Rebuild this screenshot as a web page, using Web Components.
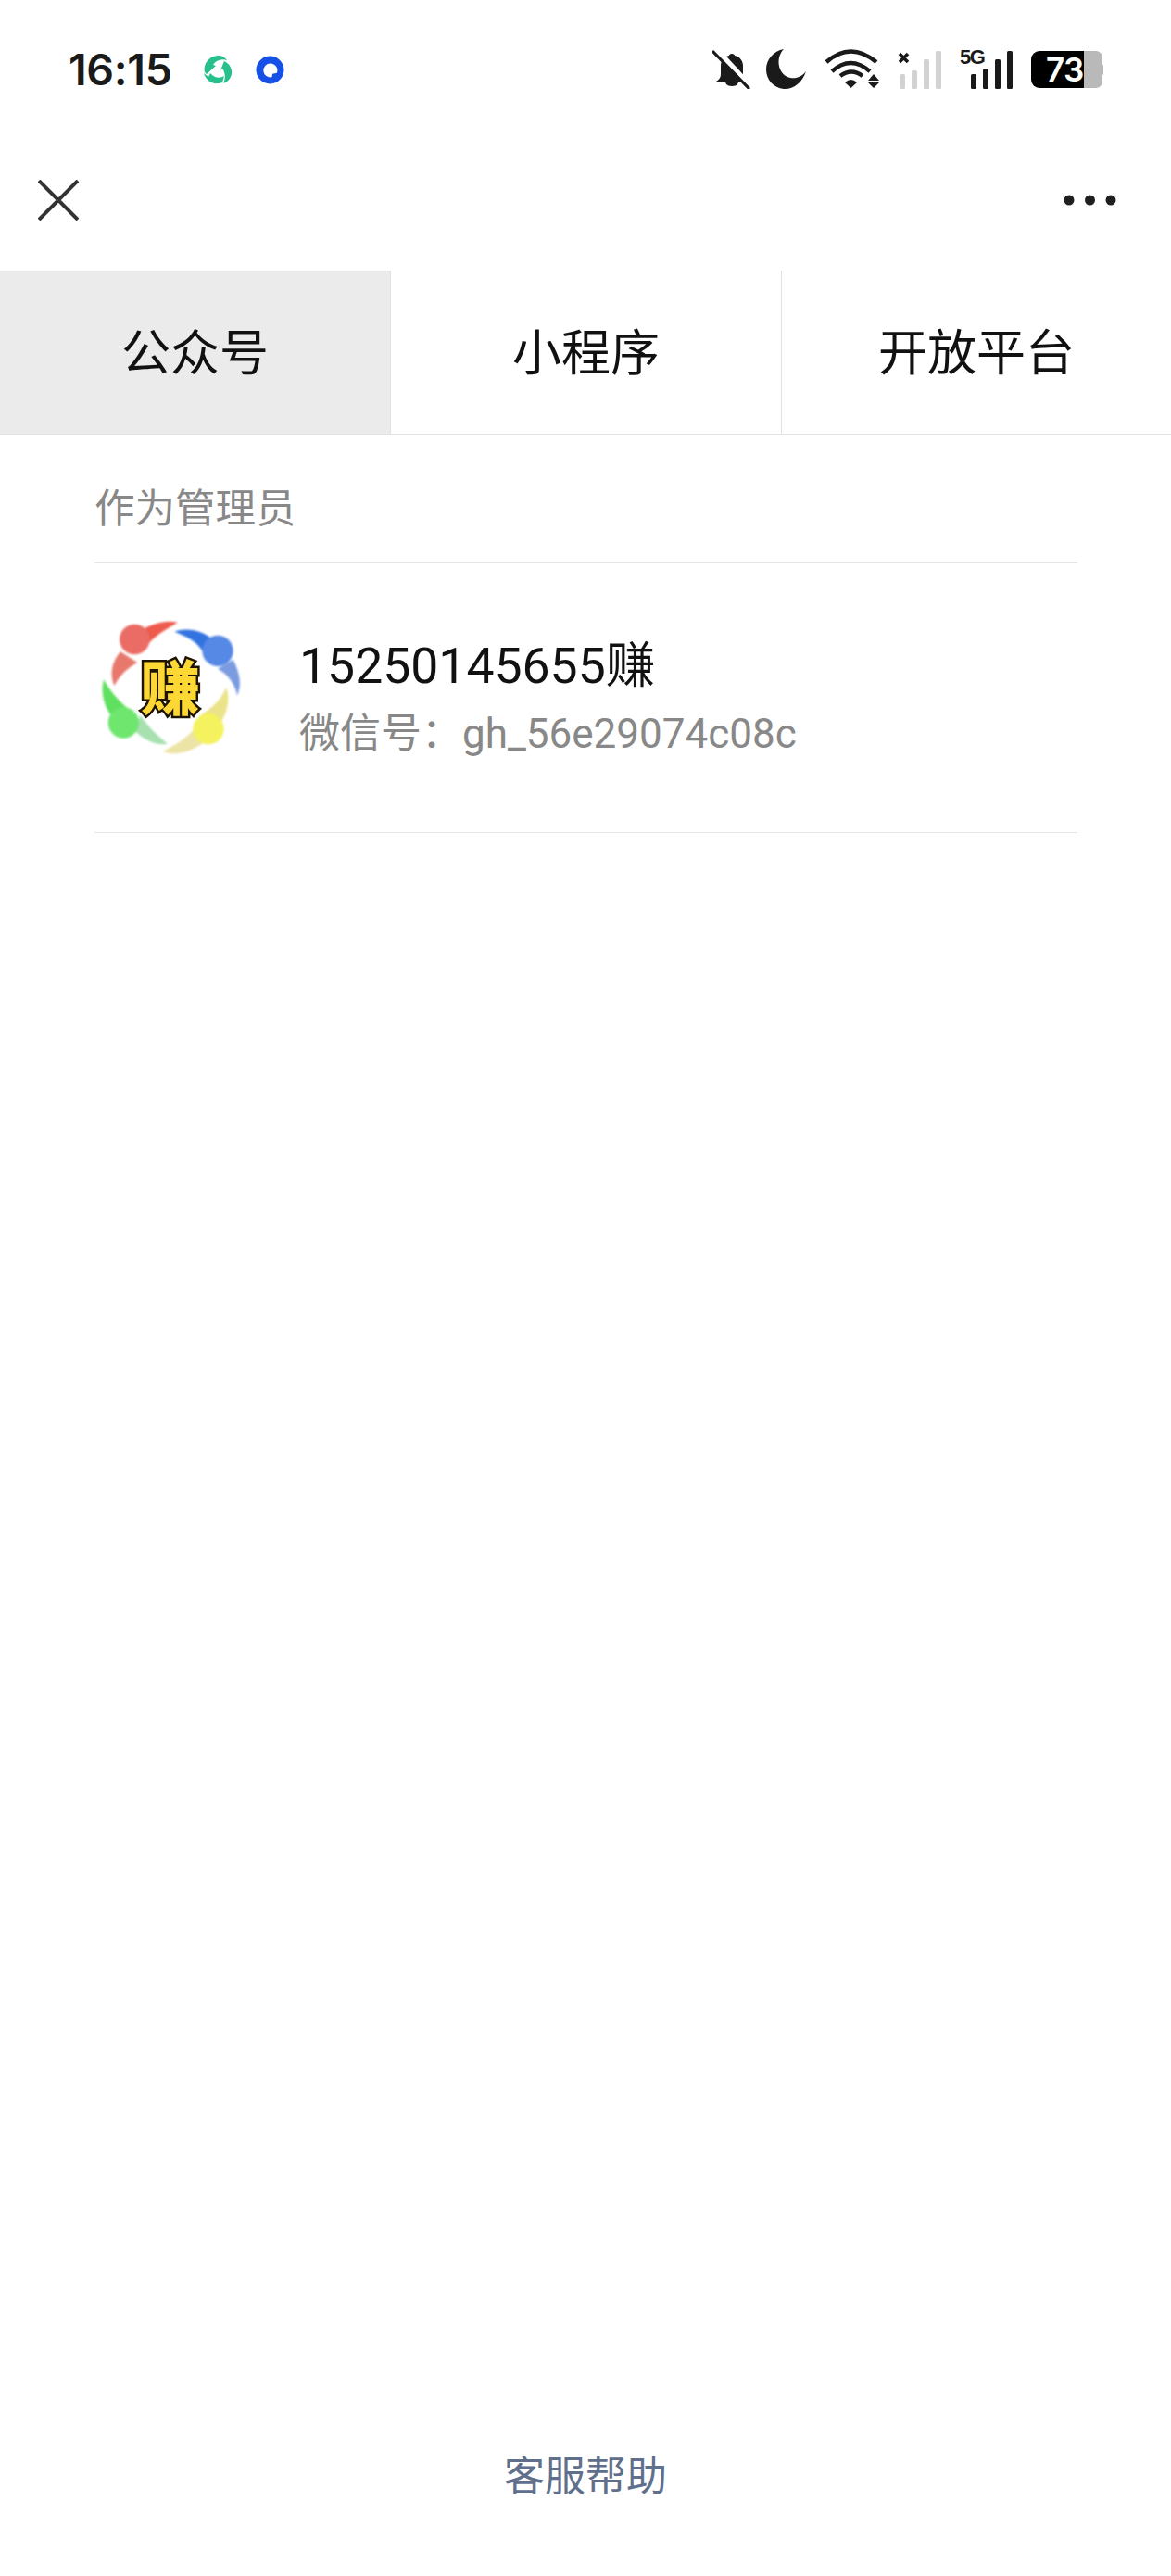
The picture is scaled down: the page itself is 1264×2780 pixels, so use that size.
<!DOCTYPE html>
<html lang="zh-CN">
<head>
<meta charset="utf-8">
<title>公众号</title>
<style>
  html, body { margin: 0; height: 100%; background: #fff; }
  body { font-family: Roboto, "Noto Sans CJK SC", sans-serif; }
</style>
</head>
<body>
<app-page>
  <status-bar slot="top" time="16:15"></status-bar>
  <nav-bar slot="top"></nav-bar>
  <tab-bar slot="top">
    <tab-item active>公众号</tab-item>
    <tab-item>小程序</tab-item>
    <tab-item>开放平台</tab-item>
  </tab-bar>
  <account-list slot="top" heading="作为管理员">
    <account-row name="15250145655赚" wxid="微信号：gh_56e29074c08c"></account-row>
  </account-list>
  <help-link slot="bottom">客服帮助</help-link>
</app-page>

<script>
class AppPage extends HTMLElement {
  constructor() {
    super();
    this.attachShadow({ mode: "open" }).innerHTML = `
      <style>
        :host { display: flex; flex-direction: column; height: 2780px; overflow: hidden; }
        .top { flex: 1; }
      </style>
      <div class="top"><slot name="top"></slot></div>
      <slot name="bottom"></slot>`;
  }
}

class StatusBar extends HTMLElement {
  constructor() {
    super();
    this.attachShadow({ mode: "open" }).innerHTML = `
      <style>
        :host { display: flex; align-items: center; height: 150px; padding: 0 74px; box-sizing: border-box; }
        .time { font: 600 46.5px/1 Inter, "Liberation Sans", sans-serif; color: #1a1a1a; letter-spacing: -0.3px; width: 144px; }
        .apps { display: flex; gap: 25px; align-items: center; }
        .right { margin-left: auto; display: flex; align-items: center; }
        svg { display: block; }
        .signal { position: relative; width: 57px; height: 44px; margin-left: 20px; }
        .signal span { position: absolute; left: 0; top: -2px; font: 700 22px/1 "Liberation Sans", sans-serif; color: #1a1a1a; letter-spacing: -1.5px; }
        .batt { position: relative; width: 77px; height: 40px; margin-left: 20px; background: linear-gradient(90deg, #000 0 57px, #b9b9b9 57px); border-radius: 9px 7px 7px 9px; }
        .batt::after { content: ""; position: absolute; right: -1px; top: 14px; width: 3px; height: 13px; background: #b9b9b9; border-radius: 0 3px 3px 0; }
        .batt span { position: absolute; left: 16px; top: 2px; font: 600 35px/36px Inter, "Liberation Sans", sans-serif; color: #fff; letter-spacing: -0.5px; }
      </style>
      <div class="time"></div>
      <div class="apps">
        <svg width="33" height="32" viewBox="0 0 33 32">
          <path d="M3 19C1 10 8 1 18 1C22 1 25 3 27 6C21 4 15 6 12 11L15 12L5 21Z" fill="#27bf8b"/>
          <path d="M24 7C31 10 34 18 31 24C29 28 26 30 23 31C26 25 25 19 22 15L20 17Z" fill="#27bf8b"/>
          <path d="M2 20C4 27 10 32 18 31C20 31 21 30 22 30L24 23C19 26 13 25 9 20L7 24Z" fill="#27bf8b"/>
        </svg>
        <svg width="31" height="31" viewBox="0 0 31 31">
          <circle cx="15.5" cy="15.5" r="15" fill="#1650e6"/>
          <path d="M16 8.5a7.5 7.5 0 1 0 1.5 14.8l.6-3.6 4.8-1A7.5 7.5 0 0 0 16 8.5Z" fill="#fff"/>
        </svg>
      </div>
      <div class="right">
        <svg width="42" height="42" viewBox="0 0 42 42">
          <path d="M21 4c2 0 3 1 3 2 5 1 9 5 9 11v9c0 3 3 6 6 8H4c3-2 5-4 5-8v-9c0-6 4-10 9-11 0-1 1-2 3-2Z M14 35h14c-1 3-4 4-7 4s-6-1-7-4Z" fill="#1a1a1a"/>
          <path d="M4 0l36 39" stroke="#fff" stroke-width="7"/>
          <path d="M1 2l38 39" stroke="#1a1a1a" stroke-width="3.2" stroke-linecap="round"/>
        </svg>
        <svg width="44" height="44" viewBox="0 0 44 44" style="margin-left:16px">
          <path d="M19 0C11 8 12 23 21 29C28 33 37 32 43 24C39 37 28 44 19 43C8 42 0 33 0 22C0 11 8 2 19 0Z" fill="#1a1a1a"/>
        </svg>
        <svg width="60" height="44" viewBox="0 0 60 44" style="margin-left:19px">
          <g fill="none" stroke="#1a1a1a" stroke-width="4.5">
            <path d="M2 14Q28 -9 56 14"/>
            <path d="M8 24Q28 6 49 24"/>
            <path d="M17 29Q29 20 41 29"/>
          </g>
          <path d="M22 36Q28.5 30 35 36L28.5 42Z" fill="#1a1a1a"/>
          <path d="M53 27L59 34H47Z M47 36H59L53 42Z" fill="#1a1a1a"/>
        </svg>
        <svg width="48" height="44" viewBox="0 0 48 44" style="margin-left:18px">
          <path d="M3 5l9 9M12 5l-9 9" stroke="#1a1a1a" stroke-width="3.6"/>
          <g fill="#d2d2d2">
            <rect x="3" y="27" width="6" height="16" rx="1.5"/>
            <rect x="16" y="23" width="6" height="20" rx="1.5"/>
            <rect x="29" y="11" width="6" height="32" rx="1.5"/>
            <rect x="42" y="2" width="6" height="41" rx="1.5"/>
          </g>
        </svg>
        <div class="signal">
          <span>5G</span>
          <svg width="57" height="44" viewBox="0 0 57 44">
            <g fill="#1a1a1a">
              <rect x="12" y="27" width="6" height="16" rx="1.5"/>
              <rect x="25" y="21" width="6" height="22" rx="1.5"/>
              <rect x="38" y="11" width="6" height="32" rx="1.5"/>
              <rect x="51" y="2" width="6" height="41" rx="1.5"/>
            </g>
          </svg>
        </div>
        <div class="batt"><span>73</span></div>
      </div>`;
  }
  connectedCallback() {
    this.shadowRoot.querySelector(".time").textContent = this.getAttribute("time");
  }
}

class NavBar extends HTMLElement {
  constructor() {
    super();
    this.attachShadow({ mode: "open" }).innerHTML = `
      <style>
        :host { display: flex; align-items: center; justify-content: space-between; height: 132px; margin-bottom: 10px; padding: 0 59px 0 41px; }
        svg { display: block; }
      </style>
      <svg width="44" height="44" viewBox="0 0 44 44"><path d="M1 1l42 42M43 1L1 43" stroke="#333" stroke-width="4"/></svg>
      <svg width="57" height="12" viewBox="0 0 57 12" fill="#1f1f1f"><circle cx="6" cy="6" r="5.5"/><circle cx="28.5" cy="6" r="5.5"/><circle cx="51" cy="6" r="5.5"/></svg>`;
  }
}

class TabBar extends HTMLElement {
  constructor() {
    super();
    this.attachShadow({ mode: "open" }).innerHTML = `
      <style>
        :host { display: grid; grid-template-columns: 422px 422px 420px; height: 177px; border-bottom: 1px solid #e2e2e2; box-sizing: border-box; }
      </style>
      <slot></slot>`;
  }
}

class TabItem extends HTMLElement {
  constructor() {
    super();
    this.attachShadow({ mode: "open" }).innerHTML = `
      <style>
        :host { display: flex; align-items: center; justify-content: center; font-family: "Noto Sans CJK SC", sans-serif; font-size: 53px; color: #111; border-right: 1px solid #e2e2e2; line-height: 1; padding-bottom: 6px; box-sizing: border-box; }
        :host(:last-child) { border-right: none; }
        :host([active]) { background: #ebebeb; }
      </style>
      <slot></slot>`;
  }
}

class AccountList extends HTMLElement {
  constructor() {
    super();
    this.attachShadow({ mode: "open" }).innerHTML = `
      <style>
        :host { display: block; padding: 0 101px 0 102px; }
        h2 { margin: 0; height: 139px; box-sizing: border-box; padding-top: 53px; font-family: "Noto Sans CJK SC", sans-serif; font-size: 43.5px; line-height: 48px; font-weight: 400; color: #888; border-bottom: 1px solid #e5e5e5; }
      </style>
      <h2></h2>
      <slot></slot>`;
  }
  connectedCallback() {
    this.shadowRoot.querySelector("h2").textContent = this.getAttribute("heading");
  }
}

class AccountRow extends HTMLElement {
  constructor() {
    super();
    this.attachShadow({ mode: "open" }).innerHTML = `
      <style>
        :host { display: flex; height: 291px; box-sizing: border-box; border-bottom: 1px solid #e5e5e5; }
        .logo { position: relative; width: 220px; height: 200px; margin: 32px 0 0 -22px; flex: none; }
        .logo svg { display: block; filter: blur(.8px); }
        .logo span { position: absolute; left: 71px; top: 62px; width: 66px; text-align: center; font: 900 64px/72px "Noto Sans CJK SC", sans-serif; color: #fdd835; -webkit-text-stroke: 5px #1d1400; paint-order: stroke fill; }
        .info { margin-left: 23px; padding-top: 81px; }
        .name { font-size: 53.5px; line-height: 60px; color: #111; white-space: nowrap; }
        .wxid { font-size: 44px; line-height: 50px; margin-top: 18px; color: #888; white-space: nowrap; }
      </style>
      <div class="logo">
        <svg width="220" height="200" viewBox="0 0 660 600">
          <path d="M335 95C290 85 240 105 210 125L240 165C270 130 305 115 335 95Z" fill="#ee5a4c"/>
          <path d="M150 190C120 225 115 265 130 300C150 265 170 245 205 225Z" fill="#e8786c"/>
          <circle cx="196" cy="150" r="49" fill="#ea6c64"/>
          <path d="M325 125C370 108 420 125 450 150L420 195C395 150 360 140 325 125Z" fill="#3273e0"/>
          <path d="M515 216C535 255 545 295 528 332C522 295 500 265 465 245Z" fill="#7a9be0"/>
          <circle cx="465" cy="187" r="50" fill="#5688e6"/>
          <path d="M96 280C85 320 95 360 118 395L175 375C140 345 115 315 96 280Z" fill="#5fe05f"/>
          <path d="M195 445C230 480 270 495 303 488C275 465 245 440 215 395Z" fill="#a8e0b0"/>
          <circle cx="160" cy="420" r="50" fill="#6fe76f"/>
          <path d="M492 305C510 350 490 400 470 425L410 395C450 370 480 340 492 305Z" fill="#ebe38a"/>
          <path d="M390 440C350 480 320 495 288 512C330 530 380 515 425 480Z" fill="#ece4a6"/>
          <circle cx="435" cy="440" r="50" fill="#f4f25e"/>
        </svg>
        <span>赚</span>
      </div>
      <div class="info">
        <div class="name"></div>
        <div class="wxid"></div>
      </div>`;
  }
  connectedCallback() {
    this.shadowRoot.querySelector(".name").textContent = this.getAttribute("name");
    this.shadowRoot.querySelector(".wxid").textContent = this.getAttribute("wxid");
  }
}

class HelpLink extends HTMLElement {
  constructor() {
    super();
    this.attachShadow({ mode: "open" }).innerHTML = `
      <style>
        :host { display: block; text-align: center; font-family: "Noto Sans CJK SC", sans-serif; font-size: 44px; line-height: 50px; color: #5f6f8c; padding-bottom: 86px; }
      </style>
      <slot></slot>`;
  }
}

customElements.define("app-page", AppPage);
customElements.define("status-bar", StatusBar);
customElements.define("nav-bar", NavBar);
customElements.define("tab-bar", TabBar);
customElements.define("tab-item", TabItem);
customElements.define("account-list", AccountList);
customElements.define("account-row", AccountRow);
customElements.define("help-link", HelpLink);
</script>
</body>
</html>
